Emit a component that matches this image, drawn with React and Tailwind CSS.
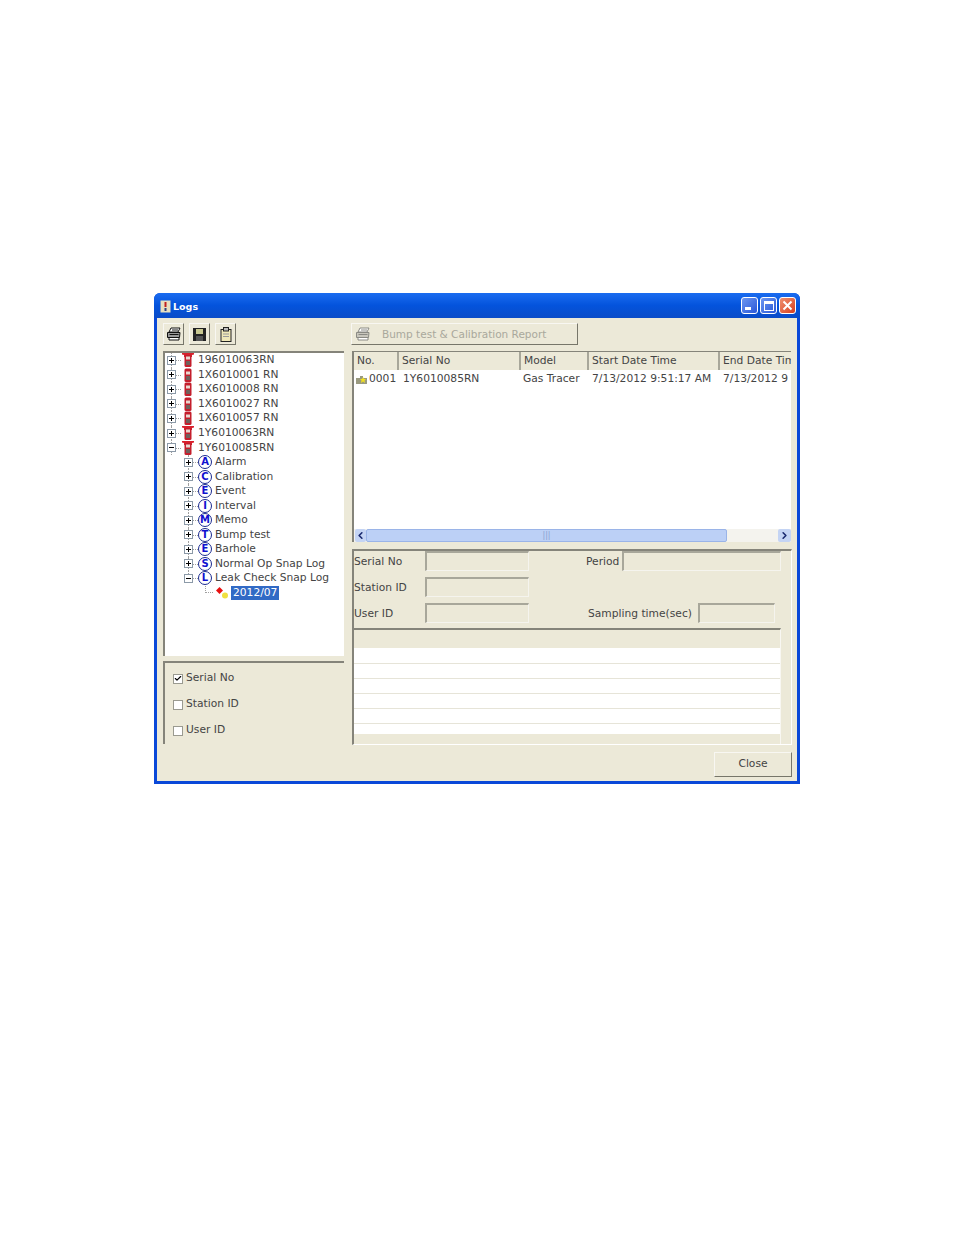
import { Check, ChevronLeft, ChevronRight } from 'lucide-react'

const FONT = "font-['DejaVu_Sans',sans-serif]"

const DEVICES = [
  { name: '196010063RN', wide: true },
  { name: '1X6010001 RN' },
  { name: '1X6010008 RN' },
  { name: '1X6010027 RN' },
  { name: '1X6010057 RN' },
  { name: '1Y6010063RN', wide: true },
  { name: '1Y6010085RN', wide: true, open: true },
]

const LOGS = [
  { letter: 'A', name: 'Alarm' },
  { letter: 'C', name: 'Calibration' },
  { letter: 'E', name: 'Event' },
  { letter: 'I', name: 'Interval' },
  { letter: 'M', name: 'Memo' },
  { letter: 'T', name: 'Bump test' },
  { letter: 'E', name: 'Barhole' },
  { letter: 'S', name: 'Normal Op Snap Log' },
  { letter: 'L', name: 'Leak Check Snap Log', open: true },
]

const COLUMNS = [
  { label: 'No.', w: 'w-[45px]' },
  { label: 'Serial No', w: 'w-[122px]' },
  { label: 'Model', w: 'w-[68px]' },
  { label: 'Start Date Time', w: 'w-[131px]' },
  { label: 'End Date Time', w: 'flex-1' },
]

function Expander({ open, last }) {
  return (
    <span className="relative flex h-full w-[14px] shrink-0 items-center">
      <span className={`absolute left-[4px] top-0 border-l border-dotted border-[#a0a0a0] ${last ? 'h-1/2' : 'h-full'}`} />
      <span className="absolute left-[5px] top-1/2 w-[9px] border-t border-dotted border-[#a0a0a0]" />
      <span className="relative flex h-[9px] w-[9px] items-center justify-center border border-[#8c9aa8] bg-white">
        <span className="absolute h-px w-[5px] bg-black" />
        {!open && <span className="absolute h-[5px] w-px bg-black" />}
      </span>
    </span>
  )
}

function DeviceIcon({ wide }) {
  return (
    <svg width="14" height="14" viewBox="0 0 14 14" className="shrink-0">
      {wide && <path d="M1 0h12v1.500l-2 .5v2H3V2l-2-.5z" fill="#d8202c" />}
      <rect x="3.500" y={wide ? 2 : 0.5} width="7" height={wide ? 12 : 13.5} rx="1.500" fill="#c41e2c" />
      <rect x="5" y="3.500" width="4" height="3" fill="#e8d8d0" />
      <rect x="5" y="8" width="4" height="4" fill="#70605c" />
    </svg>
  )
}

function LetterIcon({ letter }) {
  return (
    <span className="flex h-[14px] w-[14px] shrink-0 items-center justify-center rounded-full border-[1.5px] border-[#1a2a90] bg-white text-[10px] font-bold leading-none text-[#1010d0]">
      {letter}
    </span>
  )
}

function PrinterIcon({ muted }) {
  const c = muted ? '#8a8a84' : '#111'
  return (
    <svg width="16" height="14" viewBox="0 0 16 14">
      <path d="M5 1h9l-2 4H3z" fill="#fff" stroke={c} />
      <path d="M1.500 5.500h12.500l-.5 5H1.500z" fill={muted ? '#c8c6bc' : '#999'} stroke={c} />
      <path d="M3 10.500h10v2.500H3z" fill="#fff" stroke={c} />
      <path d="M6 3h6M3.500 7.500h9" stroke={c} />
    </svg>
  )
}

function ToolButton({ children }) {
  return (
    <button type="button" className="flex h-[22px] w-[21px] items-center justify-center border border-[#f8f7f2] border-b-[#77766a] border-r-[#77766a] bg-[#ece9d8]">
      {children}
    </button>
  )
}

function CheckRow({ label, checked }) {
  return (
    <label className="flex h-[13px] items-center gap-[3px] text-[10.7px] text-[#444]">
      <span className="flex h-[10px] w-[10px] items-center justify-center border border-[#9a9a90] bg-white">
        {checked && <Check size={9} strokeWidth={3.5} className="text-black" />}
      </span>
      {label}
    </label>
  )
}

function Field({ w }) {
  return <div className={`h-[20px] shrink-0 border border-[#f5f4ee] border-l-2 border-t-2 border-l-[#a8a79a] border-t-[#a8a79a] bg-[#ece9d8] ${w}`} />
}

export default function App() {
  return (
    <div className={`min-h-[1235px] w-[954px] bg-white pl-[154px] pt-[293px] ${FONT}`}>
      <div className="flex h-[491px] w-[646px] flex-col rounded-t-[6px] bg-[#0a48d8]">
        {/* Title bar */}
        <div className="flex h-[25px] shrink-0 items-center rounded-t-[6px] bg-gradient-to-b from-[#1a6cf0] via-[#0453dc] to-[#0a4cc8] pl-[6px] pr-[4px]">
          <svg width="11" height="13" viewBox="0 0 11 13" className="mr-[2px] mt-[2px]">
            <rect x="0.500" y="0.500" width="10" height="12" fill="#e8e0c0" />
            <rect x="4.500" y="2" width="2" height="5" fill="#c02020" />
            <rect x="4.500" y="8" width="2" height="3" fill="#304080" />
          </svg>
          <span className="pt-[3px] text-[9.5px] font-bold text-white">Logs</span>
          <div className="ml-auto flex gap-[2px]">
            <div className="flex h-[17px] w-[17px] items-end rounded-[3px] border border-white bg-gradient-to-br from-[#6d96f0] to-[#2a56d8] px-[3px] pb-[3px]">
              <span className="h-[3px] w-[6px] bg-white" />
            </div>
            <div className="flex h-[17px] w-[17px] items-center justify-center rounded-[3px] border border-white bg-gradient-to-br from-[#6d96f0] to-[#2a56d8]">
              <span className="h-[10px] w-[10px] border border-t-[3px] border-white" />
            </div>
            <div className="flex h-[17px] w-[17px] items-center justify-center rounded-[3px] border border-white bg-gradient-to-br from-[#ee9070] to-[#d83a18]">
              <svg width="11" height="11" viewBox="0 0 11 11"><path d="M1.500 1.500l8 8M9.500 1.500l-8 8" stroke="#fff" strokeWidth="2" /></svg>
            </div>
          </div>
        </div>

        {/* Client area */}
        <div className="mx-[3px] mb-[4px] flex flex-1 flex-col bg-[#ece9d8] pl-[6px] pr-[5px] pt-[5px]">
          <div className="flex flex-1 gap-[8px]">
            {/* Left column */}
            <div className="flex w-[181px] shrink-0 flex-col">
              <div className="flex h-[28px] shrink-0 gap-[5px]">
                <ToolButton><PrinterIcon /></ToolButton>
                <ToolButton>
                  <svg width="13" height="13" viewBox="0 0 13 13">
                    <path d="M0 0h13v13H0z" fill="#222" />
                    <path d="M3 1h7v5H3z" fill="#c8c890" />
                    <path d="M3 8h7v5H3z" fill="#555" />
                  </svg>
                </ToolButton>
                <ToolButton>
                  <svg width="12" height="15" viewBox="0 0 12 15">
                    <rect x="1" y="2.500" width="10" height="12" fill="#f0e8b8" stroke="#222" />
                    <rect x="3.500" y="0.500" width="5" height="3.500" fill="#bbb" stroke="#222" />
                    <path d="M3 7h6M3 9.500h6" stroke="#999" />
                  </svg>
                </ToolButton>
              </div>
              {/* Device tree */}
              <div className="h-[305px] shrink-0 border-l-2 border-t-2 border-l-[#85847a] border-t-[#85847a] bg-white pl-[2px] text-[10.7px] text-[#444]">
                {DEVICES.map((d) => (
                  <div key={d.name} className="flex h-[14.55px] items-center">
                    <Expander open={d.open} />
                    <DeviceIcon wide={d.wide} />
                    <span className="ml-[3px] whitespace-nowrap">{d.name}</span>
                  </div>
                ))}
                {LOGS.map((l) => (
                  <div key={l.name} className="flex h-[14.55px] items-center pl-[17px]">
                    <Expander open={l.open} last={l.open} />
                    <LetterIcon letter={l.letter} />
                    <span className="ml-[3px] whitespace-nowrap">{l.name}</span>
                  </div>
                ))}
                <div className="flex h-[14.55px] items-center pl-[38px]">
                  <span className="h-1/2 w-[8px] self-start border-b border-l border-dotted border-[#a0a0a0]" />
                  <svg width="16" height="14" viewBox="0 0 16 14" className="shrink-0">
                    <path d="M6.500 1l3.500 3.500-3.500 3.500L3 4.500z" fill="#e81010" />
                    <circle cx="12" cy="9.500" r="3" fill="#f0e040" />
                  </svg>
                  <span className="ml-[2px] bg-[#316ac5] px-[2px] leading-[14px] text-white">2012/07</span>
                </div>
              </div>
              {/* Options */}
              <div className="mt-[5px] flex h-[83px] flex-col gap-[13px] border-l-2 border-t-2 border-l-[#85847a] border-t-[#85847a] pl-[8px] pt-[9px]">
                <CheckRow label="Serial No" checked />
                <CheckRow label="Station ID" />
                <CheckRow label="User ID" />
              </div>
            </div>

            {/* Right column */}
            <div className="flex w-[440px] shrink-0 flex-col">
              <div className="h-[28px] shrink-0">
                <button type="button" className="-ml-px flex h-[22px] w-[227px] items-center border border-[#f8f7f2] border-b-[#77766a] border-r-[#77766a] pl-[3px] text-[10.5px] text-[#a9a89c]">
                  <PrinterIcon muted />
                  <span className="ml-[11px] pt-[2px]">Bump test &amp; Calibration Report</span>
                </button>
              </div>
              {/* List view */}
              <div className="mr-[1px] flex h-[191px] shrink-0 flex-col border-l-2 border-t border-l-[#85847a] border-t-[#85847a] bg-white text-[10.7px] text-[#444]">
                <div className="flex h-[18px] shrink-0 overflow-hidden bg-[#ece9d8]">
                  {COLUMNS.map((c) => (
                    <div key={c.label} className={`flex h-full shrink-0 items-center whitespace-nowrap border-r-2 border-r-[#a8a79a] pl-[3px] ${c.w}`}>{c.label}</div>
                  ))}
                </div>
                <div className="flex h-[19px] shrink-0 items-center overflow-hidden whitespace-nowrap">
                  <span className="flex w-[45px] shrink-0 items-center pl-[2px]">
                    <svg width="11" height="9" viewBox="0 0 11 9" className="mr-[2px] shrink-0">
                      <path d="M0 3h4V1h3v2h4v6H0z" fill="#9a9a80" />
                      <path d="M7 2l1 2h2L8.500 5.500 9 8 7 6.500 5 8l.5-2.500L4 4h2z" fill="#f0e020" />
                    </svg>
                    0001
                  </span>
                  <span className="w-[122px] shrink-0 pl-[4px]">1Y6010085RN</span>
                  <span className="w-[68px] shrink-0 pl-[2px]">Gas Tracer</span>
                  <span className="w-[131px] shrink-0 pl-[3px]">7/13/2012 9:51:17 AM</span>
                  <span className="flex-1 pl-[3px]">7/13/2012 9</span>
                </div>
                <div className="flex-1" />
                {/* Horizontal scrollbar */}
                <div className="flex h-[13px] shrink-0 items-stretch bg-[#f4f3ee]">
                  <div className="ml-[1px] flex w-[11px] items-center justify-center rounded-[2px] bg-[#c4d4f4]">
                    <ChevronLeft size={11} strokeWidth={3.5} className="text-[#1a2a70]" />
                  </div>
                  <div className="flex w-[361px] items-center justify-center rounded-[2px] border border-[#9ab4e8] bg-[#bcd0f6] text-[8px] leading-none text-[#8aa0d0]">|||</div>
                  <div className="flex-1" />
                  <div className="flex w-[13px] items-center justify-center rounded-[2px] bg-[#c4d4f4]">
                    <ChevronRight size={11} strokeWidth={3.5} className="text-[#1a2a70]" />
                  </div>
                </div>
              </div>
              {/* Detail panel */}
              <div className="mt-[7px] flex h-[196px] flex-col border-b border-l-2 border-r border-t-2 border-b-white border-l-[#85847a] border-r-white border-t-[#85847a] text-[10.7px] text-[#444]">
                <div className="flex h-[77px] shrink-0 flex-col gap-[6px]">
                  <div className="flex items-center">
                    <span className="w-[71px] shrink-0 pt-[2px]">Serial No</span>
                    <Field w="w-[104px]" />
                    <span className="ml-[57px] w-[36px] shrink-0 pt-[2px]">Period</span>
                    <Field w="w-[159px]" />
                  </div>
                  <div className="flex items-center">
                    <span className="w-[71px] shrink-0 pt-[2px]">Station ID</span>
                    <Field w="w-[104px]" />
                  </div>
                  <div className="flex items-center">
                    <span className="w-[71px] shrink-0 pt-[2px]">User ID</span>
                    <Field w="w-[104px]" />
                    <span className="ml-[59px] w-[110px] shrink-0 whitespace-nowrap pt-[2px]">Sampling time(sec)</span>
                    <Field w="w-[77px]" />
                  </div>
                </div>
                {/* Empty grid */}
                <div className="mr-[10px] flex flex-1 flex-col border-r border-t-2 border-r-[#f8f7f2] border-t-[#85847a]">
                  <div className="h-[19px] shrink-0 border-b border-b-white" />
                  {[0, 1, 2, 3, 4].map((i) => (
                    <div key={i} className="h-[15.1px] shrink-0 border-b border-b-[#e6e4d8] bg-white" />
                  ))}
                  <div className="h-[10px] shrink-0 bg-white" />
                </div>
              </div>
            </div>
          </div>

          {/* Footer */}
          <div className="flex h-[36px] shrink-0 items-start justify-end pt-[7px]">
            <button type="button" className="h-[25px] w-[78px] border border-[#f8f7f2] border-b-[#77766a] border-r-[#77766a] text-[10.7px] text-[#444]">Close</button>
          </div>
        </div>
      </div>
    </div>
  )
}
